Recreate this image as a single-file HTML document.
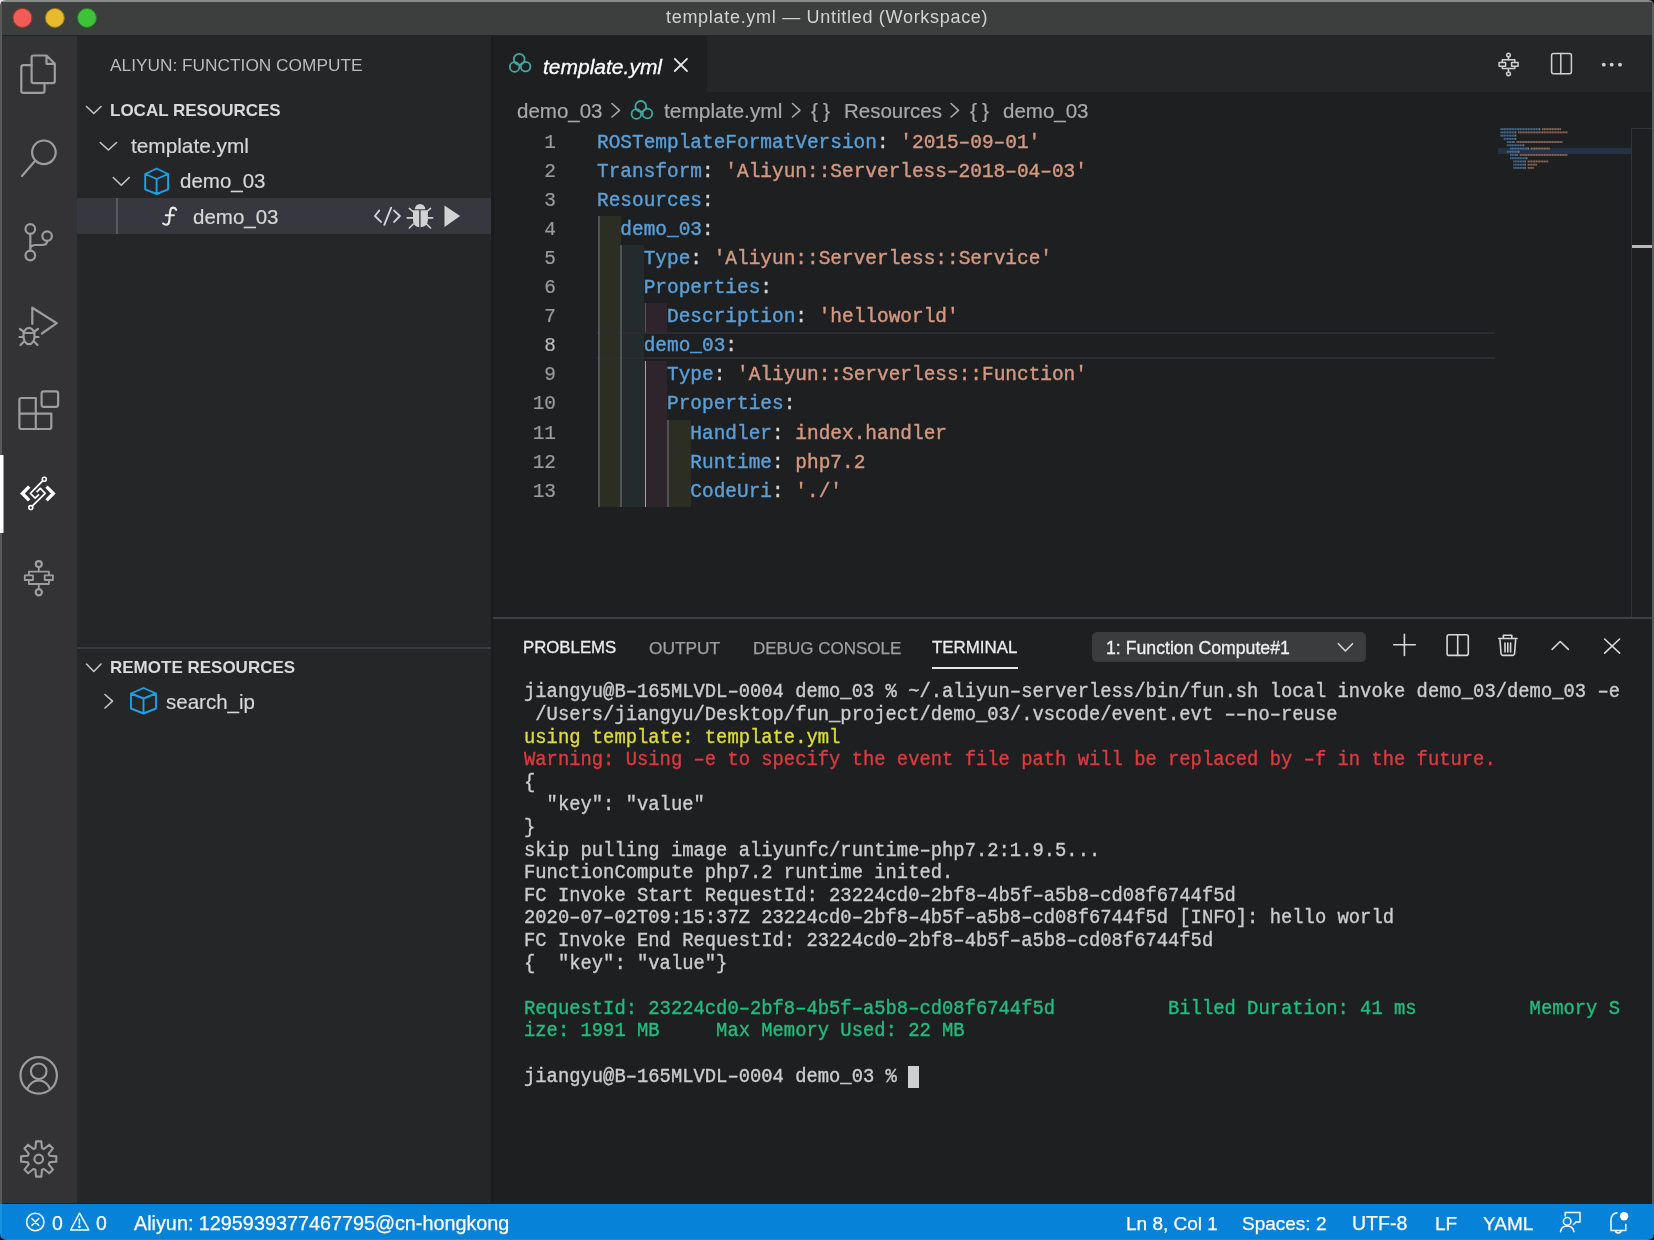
<!DOCTYPE html>
<html><head><meta charset="utf-8"><title>VS Code</title>
<style>
*{margin:0;padding:0;box-sizing:border-box}
html,body{width:1654px;height:1240px;overflow:hidden;background:#1e1f21}
body{position:relative;font-family:"Liberation Sans",sans-serif;color:#ccc}
.a{position:absolute}
.t{position:absolute;white-space:pre;line-height:1;will-change:transform}
#title{left:0;top:0;width:1654px;height:36px;background:#3d3e3e}
#act{left:0;top:36px;width:77px;height:1168px;background:#333336}
#side{left:77px;top:36px;width:414px;height:1168px;background:#252628}
#tabs{left:491px;top:36px;width:1163px;height:56px;background:#252628}
#tab{left:491px;top:36px;width:216px;height:56px;background:#1e1f21}
#status{left:0;top:1204px;width:1654px;height:36px;background:#0683d9}
.code{position:absolute;left:597px;white-space:pre;font-family:"Liberation Mono",monospace;font-size:19.45px;line-height:29.03px;height:29.03px;color:#d4d4d4;transform:scaleY(1.07);transform-origin:0 19.69px;-webkit-text-stroke:0.4px currentColor;will-change:transform}
.ln{position:absolute;left:500px;width:56px;text-align:right;font-family:"Liberation Mono",monospace;font-size:19.45px;line-height:29.03px;color:#858585;transform:scaleY(1.07);transform-origin:0 19.69px;-webkit-text-stroke:0.2px currentColor;will-change:transform}
.k{color:#5a9fd8}.s{color:#d49880}
.term{position:absolute;left:524px;white-space:pre;font-family:"Liberation Mono",monospace;font-size:18.83px;line-height:22.6px;color:#cccccc;transform:scaleY(1.09);transform-origin:0 16.32px;-webkit-text-stroke:0.35px currentColor;will-change:transform}
.y{color:#dcdc3c}.r{color:#e0393e}.g{color:#23bd7e}
.ui{color:#d6d6d6;font-size:20.5px;-webkit-text-stroke:0.2px currentColor;will-change:transform}
.bc{color:#a9a9a9;font-size:20.5px;-webkit-text-stroke:0.2px currentColor;will-change:transform}
</style></head><body>
<div id="title" class="a"></div>
<div class="a" style="left:0;top:0;width:1654px;height:1.5px;background:#8a8a8a"></div>
<div class="a" style="left:0;top:35px;width:1654px;height:1.5px;background:#232425"></div>
<div id="act" class="a"></div>
<div id="side" class="a"></div>
<div id="tabs" class="a"></div>
<div id="tab" class="a"></div>
<div id="status" class="a"></div>
<div class="a" style="left:491px;top:36px;width:2.5px;height:1168px;background:#1b1c1e"></div>
<div class="a" style="left:0;top:1203px;width:1654px;height:1px;background:#0f2437"></div>
<div class="a" style="left:0;top:1px;width:2px;height:1203px;background:#59595c"></div>
<div class="a" style="left:1652px;top:1px;width:2px;height:1203px;background:#5c5c5f"></div>
<div class="a" style="left:0;top:1204px;width:2px;height:36px;background:#1792e0"></div>
<div class="a" style="left:0;top:1238.5px;width:1654px;height:1.5px;background:#1090e0"></div>
<svg class="a" style="left:0;top:0" width="1654" height="1240"><path d="M0 0 H6 Q0 0 0 6 Z" fill="#e8e8ec"/><path d="M1654 0 H1648 Q1654 0 1654 6 Z" fill="#0a1528"/><path d="M0 1240 H7 Q0 1240 0 1233 Z" fill="#06122a"/><path d="M1654 1240 H1647 Q1654 1240 1654 1233 Z" fill="#06122a"/></svg>
<div class="t" style="left:666px;top:8.2px;font-size:18px;letter-spacing:0.7px;color:#d2d2d2">template.yml — Untitled (Workspace)</div>
<div class="t" style="left:110px;top:56.5px;font-size:17.3px;color:#bbbbbb">ALIYUN: FUNCTION COMPUTE</div>
<div class="t" style="left:110px;top:102px;font-size:17px;font-weight:bold;color:#dadada">LOCAL RESOURCES</div>
<div class="t ui" style="left:131px;top:136px;font-size:20.8px">template.yml</div>
<div class="t ui" style="left:180px;top:171px">demo_03</div>
<div class="a" style="left:77px;top:198px;width:414px;height:36px;background:#37383f"></div>
<div class="a" style="left:116px;top:198px;width:2px;height:36px;background:#585a5e"></div>
<div class="t ui" style="left:193px;top:207px">demo_03</div>
<div class="a" style="left:77px;top:647px;width:414px;height:2px;background:#3a3b3e"></div>
<div class="t" style="left:110px;top:658.7px;font-size:17px;font-weight:bold;color:#dadada">REMOTE RESOURCES</div>
<div class="t ui" style="left:166px;top:691.5px">search_ip</div>
<div class="t" style="left:543px;top:56px;font-size:21px;font-style:italic;color:#ffffff;-webkit-text-stroke:0.3px #fff">template.yml</div>
<div class="t bc" style="left:517px;top:100.7px">demo_03</div>
<div class="t bc" style="left:664px;top:100.7px;font-size:20.9px">template.yml</div>
<div class="t bc" style="left:844px;top:100.7px">Resources</div>
<div class="t bc" style="left:1003px;top:100.7px">demo_03</div>
<div class="t bc" style="left:811px;top:99.5px;font-size:21px;letter-spacing:5px">{}</div>
<div class="t bc" style="left:969.5px;top:99.5px;font-size:21px;letter-spacing:5px">{}</div>
<div class="a" style="left:597.5px;top:216.29px;width:23.299999999999955px;height:290.30px;background:#2d2e23"></div>
<div class="a" style="left:620.8px;top:245.32px;width:23.300000000000068px;height:261.27px;background:#242b2e"></div>
<div class="a" style="left:644.1px;top:303.38px;width:23.299999999999955px;height:29.03px;background:#2e252c"></div>
<div class="a" style="left:644.1px;top:361.44px;width:23.299999999999955px;height:145.15px;background:#2e252c"></div>
<div class="a" style="left:667.4px;top:419.50px;width:23.300000000000068px;height:87.09px;background:#2d2e23"></div>
<div class="a" style="left:597px;top:331.81px;width:898px;height:27.5px;border-top:2px solid #2c2d30;border-bottom:2px solid #2c2d30"></div>
<div class="a" style="left:598px;top:216.29px;width:1.5px;height:290.30px;background:#525356"></div>
<div class="a" style="left:620.3px;top:245.32px;width:1.5px;height:261.27px;background:#525356"></div>
<div class="a" style="left:644.5px;top:303.38px;width:1.5px;height:29.03px;background:#525356"></div>
<div class="a" style="left:644.5px;top:361.44px;width:1.5px;height:145.15px;background:#a4a4a4"></div>
<div class="a" style="left:667.3px;top:419.50px;width:1.5px;height:87.09px;background:#525356"></div>
<div class="ln" style="top:129.20px;color:#9a9a9a">1</div>
<div class="code" style="top:129.20px"><span class="k">ROSTemplateFormatVersion</span>: <span class="s">&#x27;2015–09–01&#x27;</span></div>
<div class="ln" style="top:158.23px;color:#9a9a9a">2</div>
<div class="code" style="top:158.23px"><span class="k">Transform</span>: <span class="s">&#x27;Aliyun::Serverless–2018–04–03&#x27;</span></div>
<div class="ln" style="top:187.26px;color:#9a9a9a">3</div>
<div class="code" style="top:187.26px"><span class="k">Resources</span>:</div>
<div class="ln" style="top:216.29px;color:#9a9a9a">4</div>
<div class="code" style="top:216.29px">  <span class="k">demo_03</span>:</div>
<div class="ln" style="top:245.32px;color:#9a9a9a">5</div>
<div class="code" style="top:245.32px">    <span class="k">Type</span>: <span class="s">&#x27;Aliyun::Serverless::Service&#x27;</span></div>
<div class="ln" style="top:274.35px;color:#9a9a9a">6</div>
<div class="code" style="top:274.35px">    <span class="k">Properties</span>:</div>
<div class="ln" style="top:303.38px;color:#9a9a9a">7</div>
<div class="code" style="top:303.38px">      <span class="k">Description</span>: <span class="s">&#x27;helloworld&#x27;</span></div>
<div class="ln" style="top:332.41px;color:#b8b8b8">8</div>
<div class="code" style="top:332.41px">    <span class="k">demo_03</span>:</div>
<div class="ln" style="top:361.44px;color:#9a9a9a">9</div>
<div class="code" style="top:361.44px">      <span class="k">Type</span>: <span class="s">&#x27;Aliyun::Serverless::Function&#x27;</span></div>
<div class="ln" style="top:390.47px;color:#9a9a9a">10</div>
<div class="code" style="top:390.47px">      <span class="k">Properties</span>:</div>
<div class="ln" style="top:419.50px;color:#9a9a9a">11</div>
<div class="code" style="top:419.50px">        <span class="k">Handler</span>: <span class="s">index.handler</span></div>
<div class="ln" style="top:448.53px;color:#9a9a9a">12</div>
<div class="code" style="top:448.53px">        <span class="k">Runtime</span>: <span class="s">php7.2</span></div>
<div class="ln" style="top:477.56px;color:#9a9a9a">13</div>
<div class="code" style="top:477.56px">        <span class="k">CodeUri</span>: <span class="s">&#x27;./&#x27;</span></div>
<div class="a" style="left:1498px;top:148.3px;width:133px;height:6px;background:#233345"></div>
<svg class="a" style="left:0;top:0" width="1654" height="1240" opacity="0.65"><rect x="1500.40" y="128.20" width="1.45" height="1.9" fill="#5590c8"/><rect x="1502.00" y="128.20" width="1.45" height="1.9" fill="#5590c8"/><rect x="1503.60" y="128.20" width="1.45" height="1.9" fill="#5590c8"/><rect x="1505.20" y="128.20" width="1.45" height="1.9" fill="#5590c8"/><rect x="1506.80" y="128.20" width="1.45" height="1.9" fill="#5590c8"/><rect x="1508.40" y="128.20" width="1.45" height="1.9" fill="#5590c8"/><rect x="1510.00" y="128.20" width="1.45" height="1.9" fill="#5590c8"/><rect x="1511.60" y="128.20" width="1.45" height="1.9" fill="#5590c8"/><rect x="1513.20" y="128.20" width="1.45" height="1.9" fill="#5590c8"/><rect x="1514.80" y="128.20" width="1.45" height="1.9" fill="#5590c8"/><rect x="1516.40" y="128.20" width="1.45" height="1.9" fill="#5590c8"/><rect x="1518.00" y="128.20" width="1.45" height="1.9" fill="#5590c8"/><rect x="1519.60" y="128.20" width="1.45" height="1.9" fill="#5590c8"/><rect x="1521.20" y="128.20" width="1.45" height="1.9" fill="#5590c8"/><rect x="1522.80" y="128.20" width="1.45" height="1.9" fill="#5590c8"/><rect x="1524.40" y="128.20" width="1.45" height="1.9" fill="#5590c8"/><rect x="1526.00" y="128.20" width="1.45" height="1.9" fill="#5590c8"/><rect x="1527.60" y="128.20" width="1.45" height="1.9" fill="#5590c8"/><rect x="1529.20" y="128.20" width="1.45" height="1.9" fill="#5590c8"/><rect x="1530.80" y="128.20" width="1.45" height="1.9" fill="#5590c8"/><rect x="1532.40" y="128.20" width="1.45" height="1.9" fill="#5590c8"/><rect x="1534.00" y="128.20" width="1.45" height="1.9" fill="#5590c8"/><rect x="1535.60" y="128.20" width="1.45" height="1.9" fill="#5590c8"/><rect x="1537.20" y="128.20" width="1.45" height="1.9" fill="#5590c8"/><rect x="1538.80" y="128.20" width="1.45" height="1.9" fill="#b0b0b0"/><rect x="1542.00" y="128.20" width="1.45" height="1.9" fill="#c08a70"/><rect x="1543.60" y="128.20" width="1.45" height="1.9" fill="#c08a70"/><rect x="1545.20" y="128.20" width="1.45" height="1.9" fill="#c08a70"/><rect x="1546.80" y="128.20" width="1.45" height="1.9" fill="#c08a70"/><rect x="1548.40" y="128.20" width="1.45" height="1.9" fill="#c08a70"/><rect x="1550.00" y="128.20" width="1.45" height="1.9" fill="#c08a70"/><rect x="1551.60" y="128.20" width="1.45" height="1.9" fill="#c08a70"/><rect x="1553.20" y="128.20" width="1.45" height="1.9" fill="#c08a70"/><rect x="1554.80" y="128.20" width="1.45" height="1.9" fill="#c08a70"/><rect x="1556.40" y="128.20" width="1.45" height="1.9" fill="#c08a70"/><rect x="1558.00" y="128.20" width="1.45" height="1.9" fill="#c08a70"/><rect x="1559.60" y="128.20" width="1.45" height="1.9" fill="#c08a70"/><rect x="1500.40" y="131.43" width="1.45" height="1.9" fill="#5590c8"/><rect x="1502.00" y="131.43" width="1.45" height="1.9" fill="#5590c8"/><rect x="1503.60" y="131.43" width="1.45" height="1.9" fill="#5590c8"/><rect x="1505.20" y="131.43" width="1.45" height="1.9" fill="#5590c8"/><rect x="1506.80" y="131.43" width="1.45" height="1.9" fill="#5590c8"/><rect x="1508.40" y="131.43" width="1.45" height="1.9" fill="#5590c8"/><rect x="1510.00" y="131.43" width="1.45" height="1.9" fill="#5590c8"/><rect x="1511.60" y="131.43" width="1.45" height="1.9" fill="#5590c8"/><rect x="1513.20" y="131.43" width="1.45" height="1.9" fill="#5590c8"/><rect x="1514.80" y="131.43" width="1.45" height="1.9" fill="#b0b0b0"/><rect x="1518.00" y="131.43" width="1.45" height="1.9" fill="#c08a70"/><rect x="1519.60" y="131.43" width="1.45" height="1.9" fill="#c08a70"/><rect x="1521.20" y="131.43" width="1.45" height="1.9" fill="#c08a70"/><rect x="1522.80" y="131.43" width="1.45" height="1.9" fill="#c08a70"/><rect x="1524.40" y="131.43" width="1.45" height="1.9" fill="#c08a70"/><rect x="1526.00" y="131.43" width="1.45" height="1.9" fill="#c08a70"/><rect x="1527.60" y="131.43" width="1.45" height="1.9" fill="#c08a70"/><rect x="1529.20" y="131.43" width="1.45" height="1.9" fill="#c08a70"/><rect x="1530.80" y="131.43" width="1.45" height="1.9" fill="#c08a70"/><rect x="1532.40" y="131.43" width="1.45" height="1.9" fill="#c08a70"/><rect x="1534.00" y="131.43" width="1.45" height="1.9" fill="#c08a70"/><rect x="1535.60" y="131.43" width="1.45" height="1.9" fill="#c08a70"/><rect x="1537.20" y="131.43" width="1.45" height="1.9" fill="#c08a70"/><rect x="1538.80" y="131.43" width="1.45" height="1.9" fill="#c08a70"/><rect x="1540.40" y="131.43" width="1.45" height="1.9" fill="#c08a70"/><rect x="1542.00" y="131.43" width="1.45" height="1.9" fill="#c08a70"/><rect x="1543.60" y="131.43" width="1.45" height="1.9" fill="#c08a70"/><rect x="1545.20" y="131.43" width="1.45" height="1.9" fill="#c08a70"/><rect x="1546.80" y="131.43" width="1.45" height="1.9" fill="#c08a70"/><rect x="1548.40" y="131.43" width="1.45" height="1.9" fill="#c08a70"/><rect x="1550.00" y="131.43" width="1.45" height="1.9" fill="#c08a70"/><rect x="1551.60" y="131.43" width="1.45" height="1.9" fill="#c08a70"/><rect x="1553.20" y="131.43" width="1.45" height="1.9" fill="#c08a70"/><rect x="1554.80" y="131.43" width="1.45" height="1.9" fill="#c08a70"/><rect x="1556.40" y="131.43" width="1.45" height="1.9" fill="#c08a70"/><rect x="1558.00" y="131.43" width="1.45" height="1.9" fill="#c08a70"/><rect x="1559.60" y="131.43" width="1.45" height="1.9" fill="#c08a70"/><rect x="1561.20" y="131.43" width="1.45" height="1.9" fill="#c08a70"/><rect x="1562.80" y="131.43" width="1.45" height="1.9" fill="#c08a70"/><rect x="1564.40" y="131.43" width="1.45" height="1.9" fill="#c08a70"/><rect x="1566.00" y="131.43" width="1.45" height="1.9" fill="#c08a70"/><rect x="1500.40" y="134.66" width="1.45" height="1.9" fill="#5590c8"/><rect x="1502.00" y="134.66" width="1.45" height="1.9" fill="#5590c8"/><rect x="1503.60" y="134.66" width="1.45" height="1.9" fill="#5590c8"/><rect x="1505.20" y="134.66" width="1.45" height="1.9" fill="#5590c8"/><rect x="1506.80" y="134.66" width="1.45" height="1.9" fill="#5590c8"/><rect x="1508.40" y="134.66" width="1.45" height="1.9" fill="#5590c8"/><rect x="1510.00" y="134.66" width="1.45" height="1.9" fill="#5590c8"/><rect x="1511.60" y="134.66" width="1.45" height="1.9" fill="#5590c8"/><rect x="1513.20" y="134.66" width="1.45" height="1.9" fill="#5590c8"/><rect x="1514.80" y="134.66" width="1.45" height="1.9" fill="#b0b0b0"/><rect x="1503.60" y="137.89" width="1.45" height="1.9" fill="#5590c8"/><rect x="1505.20" y="137.89" width="1.45" height="1.9" fill="#5590c8"/><rect x="1506.80" y="137.89" width="1.45" height="1.9" fill="#5590c8"/><rect x="1508.40" y="137.89" width="1.45" height="1.9" fill="#5590c8"/><rect x="1510.00" y="137.89" width="1.45" height="1.9" fill="#5590c8"/><rect x="1511.60" y="137.89" width="1.45" height="1.9" fill="#5590c8"/><rect x="1513.20" y="137.89" width="1.45" height="1.9" fill="#5590c8"/><rect x="1514.80" y="137.89" width="1.45" height="1.9" fill="#b0b0b0"/><rect x="1506.80" y="141.12" width="1.45" height="1.9" fill="#5590c8"/><rect x="1508.40" y="141.12" width="1.45" height="1.9" fill="#5590c8"/><rect x="1510.00" y="141.12" width="1.45" height="1.9" fill="#5590c8"/><rect x="1511.60" y="141.12" width="1.45" height="1.9" fill="#5590c8"/><rect x="1513.20" y="141.12" width="1.45" height="1.9" fill="#b0b0b0"/><rect x="1516.40" y="141.12" width="1.45" height="1.9" fill="#c08a70"/><rect x="1518.00" y="141.12" width="1.45" height="1.9" fill="#c08a70"/><rect x="1519.60" y="141.12" width="1.45" height="1.9" fill="#c08a70"/><rect x="1521.20" y="141.12" width="1.45" height="1.9" fill="#c08a70"/><rect x="1522.80" y="141.12" width="1.45" height="1.9" fill="#c08a70"/><rect x="1524.40" y="141.12" width="1.45" height="1.9" fill="#c08a70"/><rect x="1526.00" y="141.12" width="1.45" height="1.9" fill="#c08a70"/><rect x="1527.60" y="141.12" width="1.45" height="1.9" fill="#c08a70"/><rect x="1529.20" y="141.12" width="1.45" height="1.9" fill="#c08a70"/><rect x="1530.80" y="141.12" width="1.45" height="1.9" fill="#c08a70"/><rect x="1532.40" y="141.12" width="1.45" height="1.9" fill="#c08a70"/><rect x="1534.00" y="141.12" width="1.45" height="1.9" fill="#c08a70"/><rect x="1535.60" y="141.12" width="1.45" height="1.9" fill="#c08a70"/><rect x="1537.20" y="141.12" width="1.45" height="1.9" fill="#c08a70"/><rect x="1538.80" y="141.12" width="1.45" height="1.9" fill="#c08a70"/><rect x="1540.40" y="141.12" width="1.45" height="1.9" fill="#c08a70"/><rect x="1542.00" y="141.12" width="1.45" height="1.9" fill="#c08a70"/><rect x="1543.60" y="141.12" width="1.45" height="1.9" fill="#c08a70"/><rect x="1545.20" y="141.12" width="1.45" height="1.9" fill="#c08a70"/><rect x="1546.80" y="141.12" width="1.45" height="1.9" fill="#c08a70"/><rect x="1548.40" y="141.12" width="1.45" height="1.9" fill="#c08a70"/><rect x="1550.00" y="141.12" width="1.45" height="1.9" fill="#c08a70"/><rect x="1551.60" y="141.12" width="1.45" height="1.9" fill="#c08a70"/><rect x="1553.20" y="141.12" width="1.45" height="1.9" fill="#c08a70"/><rect x="1554.80" y="141.12" width="1.45" height="1.9" fill="#c08a70"/><rect x="1556.40" y="141.12" width="1.45" height="1.9" fill="#c08a70"/><rect x="1558.00" y="141.12" width="1.45" height="1.9" fill="#c08a70"/><rect x="1559.60" y="141.12" width="1.45" height="1.9" fill="#c08a70"/><rect x="1561.20" y="141.12" width="1.45" height="1.9" fill="#c08a70"/><rect x="1506.80" y="144.35" width="1.45" height="1.9" fill="#5590c8"/><rect x="1508.40" y="144.35" width="1.45" height="1.9" fill="#5590c8"/><rect x="1510.00" y="144.35" width="1.45" height="1.9" fill="#5590c8"/><rect x="1511.60" y="144.35" width="1.45" height="1.9" fill="#5590c8"/><rect x="1513.20" y="144.35" width="1.45" height="1.9" fill="#5590c8"/><rect x="1514.80" y="144.35" width="1.45" height="1.9" fill="#5590c8"/><rect x="1516.40" y="144.35" width="1.45" height="1.9" fill="#5590c8"/><rect x="1518.00" y="144.35" width="1.45" height="1.9" fill="#5590c8"/><rect x="1519.60" y="144.35" width="1.45" height="1.9" fill="#5590c8"/><rect x="1521.20" y="144.35" width="1.45" height="1.9" fill="#5590c8"/><rect x="1522.80" y="144.35" width="1.45" height="1.9" fill="#b0b0b0"/><rect x="1510.00" y="147.58" width="1.45" height="1.9" fill="#5590c8"/><rect x="1511.60" y="147.58" width="1.45" height="1.9" fill="#5590c8"/><rect x="1513.20" y="147.58" width="1.45" height="1.9" fill="#5590c8"/><rect x="1514.80" y="147.58" width="1.45" height="1.9" fill="#5590c8"/><rect x="1516.40" y="147.58" width="1.45" height="1.9" fill="#5590c8"/><rect x="1518.00" y="147.58" width="1.45" height="1.9" fill="#5590c8"/><rect x="1519.60" y="147.58" width="1.45" height="1.9" fill="#5590c8"/><rect x="1521.20" y="147.58" width="1.45" height="1.9" fill="#5590c8"/><rect x="1522.80" y="147.58" width="1.45" height="1.9" fill="#5590c8"/><rect x="1524.40" y="147.58" width="1.45" height="1.9" fill="#5590c8"/><rect x="1526.00" y="147.58" width="1.45" height="1.9" fill="#5590c8"/><rect x="1527.60" y="147.58" width="1.45" height="1.9" fill="#b0b0b0"/><rect x="1530.80" y="147.58" width="1.45" height="1.9" fill="#c08a70"/><rect x="1532.40" y="147.58" width="1.45" height="1.9" fill="#c08a70"/><rect x="1534.00" y="147.58" width="1.45" height="1.9" fill="#c08a70"/><rect x="1535.60" y="147.58" width="1.45" height="1.9" fill="#c08a70"/><rect x="1537.20" y="147.58" width="1.45" height="1.9" fill="#c08a70"/><rect x="1538.80" y="147.58" width="1.45" height="1.9" fill="#c08a70"/><rect x="1540.40" y="147.58" width="1.45" height="1.9" fill="#c08a70"/><rect x="1542.00" y="147.58" width="1.45" height="1.9" fill="#c08a70"/><rect x="1543.60" y="147.58" width="1.45" height="1.9" fill="#c08a70"/><rect x="1545.20" y="147.58" width="1.45" height="1.9" fill="#c08a70"/><rect x="1546.80" y="147.58" width="1.45" height="1.9" fill="#c08a70"/><rect x="1548.40" y="147.58" width="1.45" height="1.9" fill="#c08a70"/><rect x="1506.80" y="150.81" width="1.45" height="1.9" fill="#5590c8"/><rect x="1508.40" y="150.81" width="1.45" height="1.9" fill="#5590c8"/><rect x="1510.00" y="150.81" width="1.45" height="1.9" fill="#5590c8"/><rect x="1511.60" y="150.81" width="1.45" height="1.9" fill="#5590c8"/><rect x="1513.20" y="150.81" width="1.45" height="1.9" fill="#5590c8"/><rect x="1514.80" y="150.81" width="1.45" height="1.9" fill="#5590c8"/><rect x="1516.40" y="150.81" width="1.45" height="1.9" fill="#5590c8"/><rect x="1518.00" y="150.81" width="1.45" height="1.9" fill="#b0b0b0"/><rect x="1510.00" y="154.04" width="1.45" height="1.9" fill="#5590c8"/><rect x="1511.60" y="154.04" width="1.45" height="1.9" fill="#5590c8"/><rect x="1513.20" y="154.04" width="1.45" height="1.9" fill="#5590c8"/><rect x="1514.80" y="154.04" width="1.45" height="1.9" fill="#5590c8"/><rect x="1516.40" y="154.04" width="1.45" height="1.9" fill="#b0b0b0"/><rect x="1519.60" y="154.04" width="1.45" height="1.9" fill="#c08a70"/><rect x="1521.20" y="154.04" width="1.45" height="1.9" fill="#c08a70"/><rect x="1522.80" y="154.04" width="1.45" height="1.9" fill="#c08a70"/><rect x="1524.40" y="154.04" width="1.45" height="1.9" fill="#c08a70"/><rect x="1526.00" y="154.04" width="1.45" height="1.9" fill="#c08a70"/><rect x="1527.60" y="154.04" width="1.45" height="1.9" fill="#c08a70"/><rect x="1529.20" y="154.04" width="1.45" height="1.9" fill="#c08a70"/><rect x="1530.80" y="154.04" width="1.45" height="1.9" fill="#c08a70"/><rect x="1532.40" y="154.04" width="1.45" height="1.9" fill="#c08a70"/><rect x="1534.00" y="154.04" width="1.45" height="1.9" fill="#c08a70"/><rect x="1535.60" y="154.04" width="1.45" height="1.9" fill="#c08a70"/><rect x="1537.20" y="154.04" width="1.45" height="1.9" fill="#c08a70"/><rect x="1538.80" y="154.04" width="1.45" height="1.9" fill="#c08a70"/><rect x="1540.40" y="154.04" width="1.45" height="1.9" fill="#c08a70"/><rect x="1542.00" y="154.04" width="1.45" height="1.9" fill="#c08a70"/><rect x="1543.60" y="154.04" width="1.45" height="1.9" fill="#c08a70"/><rect x="1545.20" y="154.04" width="1.45" height="1.9" fill="#c08a70"/><rect x="1546.80" y="154.04" width="1.45" height="1.9" fill="#c08a70"/><rect x="1548.40" y="154.04" width="1.45" height="1.9" fill="#c08a70"/><rect x="1550.00" y="154.04" width="1.45" height="1.9" fill="#c08a70"/><rect x="1551.60" y="154.04" width="1.45" height="1.9" fill="#c08a70"/><rect x="1553.20" y="154.04" width="1.45" height="1.9" fill="#c08a70"/><rect x="1554.80" y="154.04" width="1.45" height="1.9" fill="#c08a70"/><rect x="1556.40" y="154.04" width="1.45" height="1.9" fill="#c08a70"/><rect x="1558.00" y="154.04" width="1.45" height="1.9" fill="#c08a70"/><rect x="1559.60" y="154.04" width="1.45" height="1.9" fill="#c08a70"/><rect x="1561.20" y="154.04" width="1.45" height="1.9" fill="#c08a70"/><rect x="1562.80" y="154.04" width="1.45" height="1.9" fill="#c08a70"/><rect x="1564.40" y="154.04" width="1.45" height="1.9" fill="#c08a70"/><rect x="1566.00" y="154.04" width="1.45" height="1.9" fill="#c08a70"/><rect x="1510.00" y="157.27" width="1.45" height="1.9" fill="#5590c8"/><rect x="1511.60" y="157.27" width="1.45" height="1.9" fill="#5590c8"/><rect x="1513.20" y="157.27" width="1.45" height="1.9" fill="#5590c8"/><rect x="1514.80" y="157.27" width="1.45" height="1.9" fill="#5590c8"/><rect x="1516.40" y="157.27" width="1.45" height="1.9" fill="#5590c8"/><rect x="1518.00" y="157.27" width="1.45" height="1.9" fill="#5590c8"/><rect x="1519.60" y="157.27" width="1.45" height="1.9" fill="#5590c8"/><rect x="1521.20" y="157.27" width="1.45" height="1.9" fill="#5590c8"/><rect x="1522.80" y="157.27" width="1.45" height="1.9" fill="#5590c8"/><rect x="1524.40" y="157.27" width="1.45" height="1.9" fill="#5590c8"/><rect x="1526.00" y="157.27" width="1.45" height="1.9" fill="#b0b0b0"/><rect x="1513.20" y="160.50" width="1.45" height="1.9" fill="#5590c8"/><rect x="1514.80" y="160.50" width="1.45" height="1.9" fill="#5590c8"/><rect x="1516.40" y="160.50" width="1.45" height="1.9" fill="#5590c8"/><rect x="1518.00" y="160.50" width="1.45" height="1.9" fill="#5590c8"/><rect x="1519.60" y="160.50" width="1.45" height="1.9" fill="#5590c8"/><rect x="1521.20" y="160.50" width="1.45" height="1.9" fill="#5590c8"/><rect x="1522.80" y="160.50" width="1.45" height="1.9" fill="#5590c8"/><rect x="1524.40" y="160.50" width="1.45" height="1.9" fill="#b0b0b0"/><rect x="1527.60" y="160.50" width="1.45" height="1.9" fill="#c08a70"/><rect x="1529.20" y="160.50" width="1.45" height="1.9" fill="#c08a70"/><rect x="1530.80" y="160.50" width="1.45" height="1.9" fill="#c08a70"/><rect x="1532.40" y="160.50" width="1.45" height="1.9" fill="#c08a70"/><rect x="1534.00" y="160.50" width="1.45" height="1.9" fill="#c08a70"/><rect x="1535.60" y="160.50" width="1.45" height="1.9" fill="#c08a70"/><rect x="1537.20" y="160.50" width="1.45" height="1.9" fill="#c08a70"/><rect x="1538.80" y="160.50" width="1.45" height="1.9" fill="#c08a70"/><rect x="1540.40" y="160.50" width="1.45" height="1.9" fill="#c08a70"/><rect x="1542.00" y="160.50" width="1.45" height="1.9" fill="#c08a70"/><rect x="1543.60" y="160.50" width="1.45" height="1.9" fill="#c08a70"/><rect x="1545.20" y="160.50" width="1.45" height="1.9" fill="#c08a70"/><rect x="1546.80" y="160.50" width="1.45" height="1.9" fill="#c08a70"/><rect x="1513.20" y="163.73" width="1.45" height="1.9" fill="#5590c8"/><rect x="1514.80" y="163.73" width="1.45" height="1.9" fill="#5590c8"/><rect x="1516.40" y="163.73" width="1.45" height="1.9" fill="#5590c8"/><rect x="1518.00" y="163.73" width="1.45" height="1.9" fill="#5590c8"/><rect x="1519.60" y="163.73" width="1.45" height="1.9" fill="#5590c8"/><rect x="1521.20" y="163.73" width="1.45" height="1.9" fill="#5590c8"/><rect x="1522.80" y="163.73" width="1.45" height="1.9" fill="#5590c8"/><rect x="1524.40" y="163.73" width="1.45" height="1.9" fill="#b0b0b0"/><rect x="1527.60" y="163.73" width="1.45" height="1.9" fill="#c08a70"/><rect x="1529.20" y="163.73" width="1.45" height="1.9" fill="#c08a70"/><rect x="1530.80" y="163.73" width="1.45" height="1.9" fill="#c08a70"/><rect x="1532.40" y="163.73" width="1.45" height="1.9" fill="#c08a70"/><rect x="1534.00" y="163.73" width="1.45" height="1.9" fill="#c08a70"/><rect x="1535.60" y="163.73" width="1.45" height="1.9" fill="#c08a70"/><rect x="1513.20" y="166.96" width="1.45" height="1.9" fill="#5590c8"/><rect x="1514.80" y="166.96" width="1.45" height="1.9" fill="#5590c8"/><rect x="1516.40" y="166.96" width="1.45" height="1.9" fill="#5590c8"/><rect x="1518.00" y="166.96" width="1.45" height="1.9" fill="#5590c8"/><rect x="1519.60" y="166.96" width="1.45" height="1.9" fill="#5590c8"/><rect x="1521.20" y="166.96" width="1.45" height="1.9" fill="#5590c8"/><rect x="1522.80" y="166.96" width="1.45" height="1.9" fill="#5590c8"/><rect x="1524.40" y="166.96" width="1.45" height="1.9" fill="#b0b0b0"/><rect x="1527.60" y="166.96" width="1.45" height="1.9" fill="#c08a70"/><rect x="1529.20" y="166.96" width="1.45" height="1.9" fill="#c08a70"/><rect x="1530.80" y="166.96" width="1.45" height="1.9" fill="#c08a70"/><rect x="1532.40" y="166.96" width="1.45" height="1.9" fill="#c08a70"/></svg>
<div class="a" style="left:1631px;top:127.5px;width:21px;height:489px;border-left:1px solid #333437;border-top:1px solid #333437"></div>
<div class="a" style="left:1632px;top:244.6px;width:20px;height:3.6px;background:#b8b8b8"></div>
<div class="a" style="left:493px;top:616.5px;width:1159px;height:2px;background:#3e3f42"></div>
<div class="t" style="left:523px;top:639.8px;font-size:16.8px;color:#ececec;-webkit-text-stroke:0.3px #ececec">PROBLEMS</div>
<div class="t" style="left:649px;top:639.8px;font-size:17.3px;color:#a0a0a0;-webkit-text-stroke:0.25px #a0a0a0">OUTPUT</div>
<div class="t" style="left:753px;top:639.8px;font-size:17px;color:#a0a0a0;-webkit-text-stroke:0.25px #a0a0a0">DEBUG CONSOLE</div>
<div class="t" style="left:932px;top:639.8px;font-size:16.9px;color:#ececec;-webkit-text-stroke:0.3px #ececec">TERMINAL</div>
<div class="a" style="left:932px;top:667px;width:86px;height:2px;background:#e7e7e7"></div>
<div class="a" style="left:1092px;top:631.6px;width:274px;height:30.2px;border-radius:5px;background:#3b3c3d"></div>
<div class="t" style="left:1106px;top:640px;font-size:17.7px;color:#f0f0f0;-webkit-text-stroke:0.3px #f0f0f0">1: Function Compute#1</div>
<div class="term" style="top:681.30px">jiangyu@B–165MLVDL–0004 demo_03 % ~/.aliyun–serverless/bin/fun.sh local invoke demo_03/demo_03 –e</div>
<div class="term" style="top:703.90px"> /Users/jiangyu/Desktop/fun_project/demo_03/.vscode/event.evt ––no–reuse</div>
<div class="term y" style="top:726.50px">using template: template.yml</div>
<div class="term r" style="top:749.10px">Warning: Using –e to specify the event file path will be replaced by –f in the future.</div>
<div class="term" style="top:771.70px">{</div>
<div class="term" style="top:794.30px">  &quot;key&quot;: &quot;value&quot;</div>
<div class="term" style="top:816.90px">}</div>
<div class="term" style="top:839.50px">skip pulling image aliyunfc/runtime–php7.2:1.9.5...</div>
<div class="term" style="top:862.10px">FunctionCompute php7.2 runtime inited.</div>
<div class="term" style="top:884.70px">FC Invoke Start RequestId: 23224cd0–2bf8–4b5f–a5b8–cd08f6744f5d</div>
<div class="term" style="top:907.30px">2020–07–02T09:15:37Z 23224cd0–2bf8–4b5f–a5b8–cd08f6744f5d [INFO]: hello world</div>
<div class="term" style="top:929.90px">FC Invoke End RequestId: 23224cd0–2bf8–4b5f–a5b8–cd08f6744f5d</div>
<div class="term" style="top:952.50px">{  &quot;key&quot;: &quot;value&quot;}</div>
<div class="term g" style="top:997.70px">RequestId: 23224cd0–2bf8–4b5f–a5b8–cd08f6744f5d          Billed Duration: 41 ms          Memory S</div>
<div class="term g" style="top:1020.30px">ize: 1991 MB     Max Memory Used: 22 MB</div>
<div class="term" style="top:1065.50px">jiangyu@B–165MLVDL–0004 demo_03 % </div>
<div class="a" style="left:908px;top:1065.80px;width:11px;height:22px;background:#cfcfcf"></div>
<div class="t" style="left:52px;top:1213.5px;font-size:19.5px;color:#ffffff;-webkit-text-stroke:0.25px #fff">0</div>
<div class="t" style="left:96px;top:1213.5px;font-size:19.5px;color:#ffffff;-webkit-text-stroke:0.25px #fff">0</div>
<div class="t" style="left:134px;top:1213.5px;font-size:19.8px;color:#ffffff;-webkit-text-stroke:0.25px #fff">Aliyun: 1295939377467795@cn-hongkong</div>
<div class="t" style="left:1126px;top:1213.5px;font-size:19px;color:#ffffff;-webkit-text-stroke:0.25px #fff">Ln 8, Col 1</div>
<div class="t" style="left:1242px;top:1213.5px;font-size:19px;color:#ffffff;-webkit-text-stroke:0.25px #fff">Spaces: 2</div>
<div class="t" style="left:1352px;top:1213.5px;font-size:19.5px;color:#ffffff;-webkit-text-stroke:0.25px #fff">UTF-8</div>
<div class="t" style="left:1435px;top:1213.5px;font-size:19px;color:#ffffff;-webkit-text-stroke:0.25px #fff">LF</div>
<div class="t" style="left:1483px;top:1213.5px;font-size:19px;color:#ffffff;-webkit-text-stroke:0.25px #fff">YAML</div>
<svg class="a" style="left:0;top:0" width="1654" height="1240" viewBox="0 0 1654 1240" fill="none" stroke-linecap="round" stroke-linejoin="round">
<!-- traffic lights -->
<circle cx="22.5" cy="17.9" r="9.5" fill="#f15d56" stroke="#a83530" stroke-width="1"/>
<circle cx="54.9" cy="17.9" r="9.5" fill="#e8bb2e" stroke="#9a7414" stroke-width="1"/>
<circle cx="87" cy="17.9" r="9.5" fill="#40c13a" stroke="#1f821f" stroke-width="1"/>
<!-- activity bar: explorer -->
<g stroke="#9d9d9f" stroke-width="2.2">
<path d="M31.6 66 V92.9 a0 0 0 0 0 0 0" stroke="none"/>
<path d="M31.6 65.2 H23.5 a2.2 2.2 0 0 0 -2.2 2.2 V90.7 a2.2 2.2 0 0 0 2.2 2.2 H42.3 a2.2 2.2 0 0 0 2.2 -2.2 V83.2"/>
<path d="M46.5 55.5 H33.8 a2.2 2.2 0 0 0 -2.2 2.2 V81 a2.2 2.2 0 0 0 2.2 2.2 H52.6 a2.2 2.2 0 0 0 2.2 -2.2 V63.8 Z M46.5 55.5 V63.8 H54.8"/>
<!-- search -->
<circle cx="43.9" cy="152.3" r="11.8"/>
<path d="M35 161 L22 176"/>
<!-- scm -->
<circle cx="30.3" cy="229" r="4.8"/>
<circle cx="47.1" cy="236.1" r="4.8"/>
<circle cx="30.3" cy="255.5" r="4.8"/>
<path d="M30.3 233.8 V250.7 M30.3 249 Q30.3 245 36 245 H42 Q47.1 245 47.1 240.9"/>
<!-- debug -->
<path d="M32.3 323.9 V307.7 L56.8 323.2 L41.9 333.5"/>
<ellipse cx="29" cy="336" rx="5.6" ry="8.2"/>
<path d="M23.4 333 H34.6 M20 329 L23.6 331.5 M38 329 L34.4 331.5 M19.5 337 H23.4 M34.6 337 H38.5 M20.5 345 L24 341.5 M37.5 345 L34 341.5"/>
<!-- extensions -->
<path d="M21.4 398 H35.8 V413.6 H51.3 V427 a2 2 0 0 1 -2 2 H21.4 a2 2 0 0 1 -2 -2 V400 a2 2 0 0 1 2 -2 Z M19.4 413.6 H35.8 V429"/>
<rect x="41.6" y="391.3" width="16.5" height="15.5" rx="2"/>
<!-- flow -->
<circle cx="38.8" cy="564.1" r="3"/>
<circle cx="38.8" cy="592.2" r="3.1"/>
<path d="M38.8 567.1 V570.7 M38.8 584.9 V589.1" stroke-width="1.8"/>
<rect x="28.9" y="571.6" width="20" height="12.4" stroke-width="1.8"/>
<rect x="24.8" y="575.3" width="8.2" height="4.7" fill="#333336" stroke-width="1.8"/>
<rect x="44.7" y="575.3" width="8.2" height="4.7" fill="#333336" stroke-width="1.8"/>
<!-- account -->
<circle cx="38.7" cy="1075.4" r="18.2"/>
<circle cx="38.7" cy="1071.3" r="7.8"/>
<path d="M27.5 1088.8 Q31 1080.5 38.7 1080.5 Q46.4 1080.5 49.9 1088.8"/>
<!-- gear -->
<circle cx="38.7" cy="1159" r="4.3"/>
</g>
<path stroke="#9d9d9f" stroke-width="2.1" d="M35.40 1148.19 L36.07 1141.40 L41.33 1141.40 L42.00 1148.19 L44.01 1149.02 L49.29 1144.69 L53.01 1148.41 L48.68 1153.69 L49.51 1155.70 L56.30 1156.37 L56.30 1161.63 L49.51 1162.30 L48.68 1164.31 L53.01 1169.59 L49.29 1173.31 L44.01 1168.98 L42.00 1169.81 L41.33 1176.60 L36.07 1176.60 L35.40 1169.81 L33.39 1168.98 L28.11 1173.31 L24.39 1169.59 L28.72 1164.31 L27.89 1162.30 L21.10 1161.63 L21.10 1156.37 L27.89 1155.70 L28.72 1153.69 L24.39 1148.41 L28.11 1144.69 L33.39 1149.02 Z"/>
<!-- active indicator -->
<rect x="0" y="455" width="3.5" height="78" fill="#ffffff" stroke="none"/>
<!-- aliyun icon -->
<g stroke="#ffffff">
<path d="M29.2 486.6 L22.4 493.5 L29.2 500.4 M46.5 486.6 L53.3 493.5 L46.5 500.4" stroke-width="3.4" stroke-linecap="butt" stroke-linejoin="miter"/>
<circle cx="44.3" cy="479.3" r="2" stroke-width="1.6"/>
<circle cx="30.8" cy="507.6" r="2" stroke-width="1.6"/>
<path d="M42.9 480.7 L30.4 493.3 L35.2 498.2 L39 494.4 M32.2 506.2 L45.2 493.3 L40.3 488.4 L36.6 492.1" stroke-width="1.7" stroke-linecap="butt"/>
</g>
<!-- sidebar chevrons -->
<g stroke="#c5c5c5" stroke-width="1.6">
<path d="M86.5 106.5 L93.8 113.5 L101 106.5"/>
<path d="M100.2 142.5 L108.4 150 L116.6 142.5"/>
<path d="M113.3 177.5 L121.3 185.3 L129.2 177.5"/>
<path d="M86.5 664 L93.8 671.5 L101 664"/>
<path d="M105 694.5 L112.5 701.2 L105 708"/>
</g>
<!-- cubes -->
<g stroke="#1ca0e6" stroke-width="1.9">
<path d="M156.6 168.5 L168.1 174 V189.3 L156.6 194 L145.2 189.3 V174 Z M145.2 174 L156.6 179 L168.1 174 M156.6 179 V194"/>
<path d="M143.5 688 L156 693.5 V708.5 L143.5 713.5 L131 708.5 V693.5 Z M131 693.5 L143.5 698.5 L156 693.5 M143.5 698.5 V713.5"/>
</g>
<!-- f symbol -->
<path stroke="#e8e8ea" stroke-width="2.1" d="M176.2 209.8 Q175.3 207.4 173 207.6 Q170.5 207.8 170.1 211.6 L169.3 220.8 Q169 224.6 166.3 224.7 Q164.4 224.8 163.1 223.4 M165.8 215.3 H173.9"/>
<!-- row icons -->
<g stroke="#d2d2d6" stroke-width="1.9">
<path d="M379.2 210.6 L374.9 216 L381 221.9 M391.2 207.7 L384.3 224.8 M394.1 210.6 L399.9 216 L394.1 221.9"/>
</g>
<g fill="#d2d2d6" stroke="none">
<path d="M414.8 209.3 A5.2 5.2 0 0 1 425.3 209.3 Z"/>
<path d="M413 210.3 H419.2 V227.3 Q413 226.5 413 220 Z M420.6 210.3 H427.9 V220 Q427.9 226.5 420.6 227.3 Z"/>
<path d="M444.5 205.5 L460.1 216 L444.5 226.9 Z"/>
</g>
<g stroke="#d2d2d6" stroke-width="1.6">
<path d="M409.3 208.4 L413.5 212 M430.5 208.4 L426.3 212 M407.2 217.9 H413 M427.9 217.9 H432.6 M409.3 228 L413.3 224 M430.5 228 L426.5 224"/>
</g>

<!-- tab cloud icon -->
<g stroke="#41a9a3" stroke-width="1.8">
<circle cx="519.2" cy="59.3" r="5.4"/>
<circle cx="514.6" cy="67" r="4.8"/>
<circle cx="525.6" cy="66.6" r="4.8"/>
</g>
<!-- tab close -->
<path stroke="#e8e8e8" stroke-width="1.8" d="M674.8 58.8 L687 71 M687 58.8 L674.8 71"/>
<!-- breadcrumb cloud -->
<g stroke="#41a9a3" stroke-width="1.8">
<circle cx="640.8" cy="106.4" r="5.4"/>
<circle cx="636.4" cy="114" r="4.8"/>
<circle cx="647.4" cy="113.5" r="4.8"/>
</g>
<!-- breadcrumb chevrons -->
<g stroke="#a9a9a9" stroke-width="1.6">
<path d="M612 103.5 L619.5 110.3 L612 117"/>
<path d="M792.5 103.5 L800 110.3 L792.5 117"/>
<path d="M951 103.5 L958.5 110.3 L951 117"/>
</g>
<!-- editor actions -->
<g stroke="#d0d0d0" stroke-width="1.5">
<circle cx="1508.5" cy="55" r="1.8"/>
<circle cx="1508.5" cy="73.8" r="1.9"/>
<path d="M1508.5 56.8 V59.8 M1508.5 68.6 V71.9"/>
<rect x="1502.3" y="59.8" width="12.5" height="8.8"/>
<rect x="1499.1" y="62.5" width="6.5" height="3.7" fill="#252628"/>
<rect x="1511.6" y="62.5" width="6.5" height="3.7" fill="#252628"/>
<rect x="1551.6" y="53.5" width="19.8" height="20.3" rx="2"/>
<path d="M1560.8 53.5 V73.8"/>
</g>
<g fill="#d0d0d0" stroke="none">
<circle cx="1603.8" cy="64.7" r="1.9"/><circle cx="1611.7" cy="64.7" r="1.9"/><circle cx="1620" cy="64.7" r="1.9"/>
</g>

<!-- panel icons -->
<g stroke="#d8d8d8" stroke-width="1.6">
<path d="M1338.4 643.7 L1345.4 651 L1352.5 643.7"/>
<path d="M1393.7 644.7 H1415.3 M1404.4 634.4 V655.4"/>
<rect x="1447.1" y="634.7" width="21.2" height="20.7" rx="2"/>
<path d="M1457.7 634.7 V655.4"/>
<path d="M1498.7 638.5 H1517 M1503.4 638.5 V635.3 H1511.8 V638.5 M1500 640 L1501 653.5 Q1501.3 655.4 1503 655.4 H1512.6 Q1514.3 655.4 1514.6 653.5 L1515.6 640 M1505 643 V652 M1507.8 643 V652 M1510.6 643 V652"/>
<path d="M1552.1 649.4 L1560.2 641.5 L1568.4 649.4"/>
<path d="M1604.6 639 L1619.6 653.1 M1619.6 639 L1604.6 653.1"/>
</g>

<!-- status bar icons -->
<g stroke="#ffffff" stroke-width="1.5">
<circle cx="35.3" cy="1222" r="8.7"/>
<path d="M31.8 1218.5 L38.8 1225.5 M38.8 1218.5 L31.8 1225.5"/>
<path d="M79.6 1213.2 L70.6 1230 H88.9 Z M79.4 1219 V1224"/>
<circle cx="79.4" cy="1226.8" r="0.6" fill="#fff"/>
<circle cx="1567.2" cy="1221.4" r="3.8"/>
<path d="M1560.5 1231.7 Q1561.5 1226 1567.2 1226 Q1572.9 1226 1573.9 1231.7"/>
<path d="M1565.3 1216 V1212.4 H1580 V1222 H1576 L1573.5 1224.5"/>
<path d="M1617 1212.8 Q1611.5 1213.5 1611 1220 V1230.5 H1625.8 V1224.5 M1615.5 1230.5 Q1615.5 1233 1618.2 1233 Q1621 1233 1621 1230.5"/>
</g>
<circle cx="1624.1" cy="1216.2" r="4.2" fill="#ffffff"/>
</svg>

</body></html>
